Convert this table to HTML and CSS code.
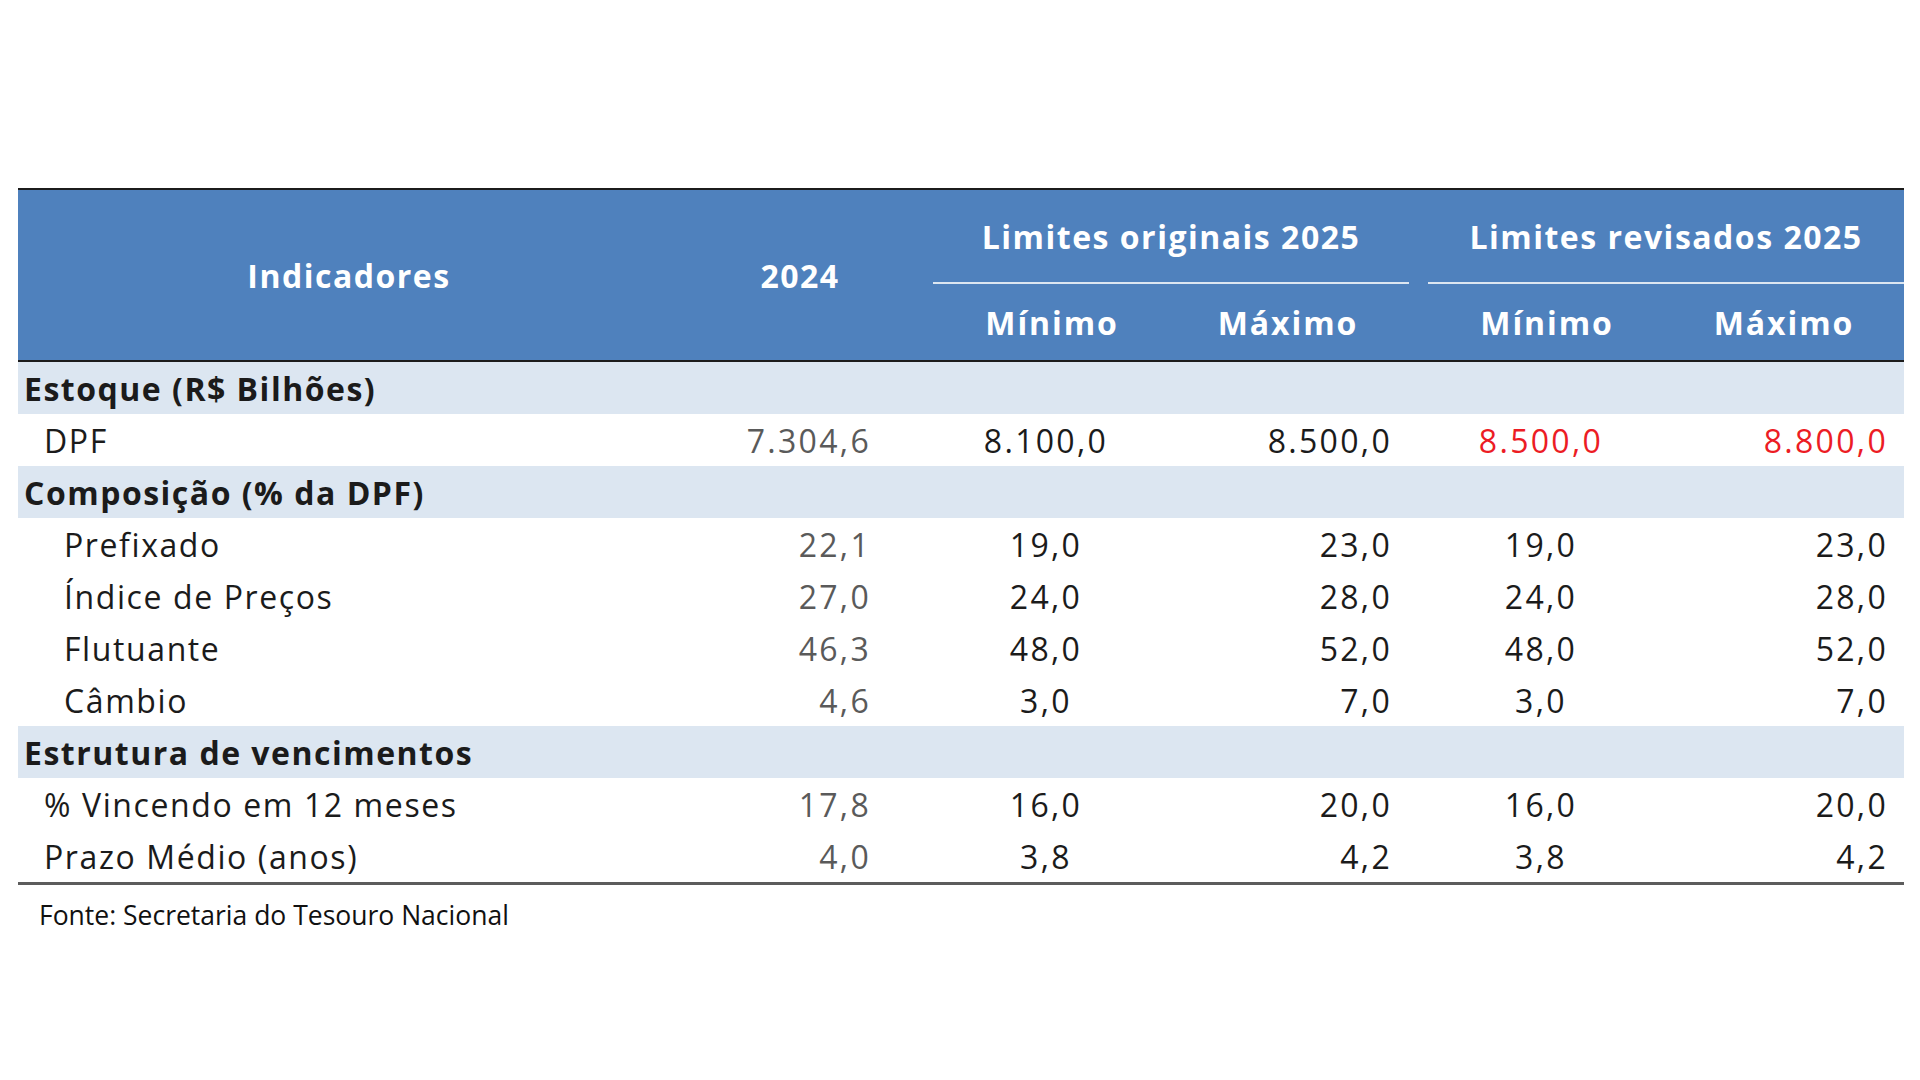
FILE: index.html
```html
<!DOCTYPE html>
<html lang="pt-BR">
<head>
<meta charset="utf-8">
<title>Limites DPF 2025</title>
<link rel="stylesheet" href="styles.css">
</head>
<body>
<main class="page">
  <table class="dpf">
    <colgroup>
      <col class="c1"><col class="c2"><col class="c3"><col class="c4"><col class="c5"><col class="c6">
    </colgroup>
    <thead>
      <tr class="h1">
        <th rowspan="2" class="hx">Indicadores</th>
        <th rowspan="2" class="hx">2024</th>
        <th colspan="2" class="grp"><div class="grp-title orig">Limites originais 2025</div></th>
        <th colspan="2" class="grp"><div class="grp-title rev">Limites revisados 2025</div></th>
      </tr>
      <tr class="h2">
        <th class="sub s3">Mínimo</th>
        <th class="sub s4">Máximo</th>
        <th class="sub s5">Mínimo</th>
        <th class="sub s6">Máximo</th>
      </tr>
    </thead>
    <tbody>
      <tr class="sec"><td colspan="6">Estoque (R$ Bilhões)</td></tr>
      <tr>
        <td class="lbl l1">DPF</td><td class="v2">7.304,6</td><td class="v3">8.100,0</td><td class="v4">8.500,0</td><td class="v5 red">8.500,0</td><td class="v6 red">8.800,0</td>
      </tr>
      <tr class="sec"><td colspan="6">Composição (% da DPF)</td></tr>
      <tr>
        <td class="lbl l2">Prefixado</td><td class="v2">22,1</td><td class="v3">19,0</td><td class="v4">23,0</td><td class="v5">19,0</td><td class="v6">23,0</td>
      </tr>
      <tr>
        <td class="lbl l2">Índice de Preços</td><td class="v2">27,0</td><td class="v3">24,0</td><td class="v4">28,0</td><td class="v5">24,0</td><td class="v6">28,0</td>
      </tr>
      <tr>
        <td class="lbl l2">Flutuante</td><td class="v2">46,3</td><td class="v3">48,0</td><td class="v4">52,0</td><td class="v5">48,0</td><td class="v6">52,0</td>
      </tr>
      <tr>
        <td class="lbl l2">Câmbio</td><td class="v2">4,6</td><td class="v3">3,0</td><td class="v4">7,0</td><td class="v5">3,0</td><td class="v6">7,0</td>
      </tr>
      <tr class="sec"><td colspan="6">Estrutura de vencimentos</td></tr>
      <tr>
        <td class="lbl l1">% Vincendo em 12 meses</td><td class="v2">17,8</td><td class="v3">16,0</td><td class="v4">20,0</td><td class="v5">16,0</td><td class="v6">20,0</td>
      </tr>
      <tr class="last">
        <td class="lbl l1">Prazo Médio (anos)</td><td class="v2">4,0</td><td class="v3">3,8</td><td class="v4">4,2</td><td class="v5">3,8</td><td class="v6">4,2</td>
      </tr>
    </tbody>
  </table>
  <p class="source">Fonte: Secretaria do Tesouro Nacional</p>
</main>
</body>
</html>
```
FILE: styles.css
```css
html, body {
  margin: 0;
  padding: 0;
  background: #ffffff;
}

.page {
  padding: 188px 16px 0 18px;
  font-family: "Open Sans", "Liberation Sans", sans-serif;
}

.dpf {
  width: 1886px;
  table-layout: fixed;
  border-collapse: collapse;
  border-top: 2px solid #1c1c1c;
  border-bottom: 3px solid #5c5c5c;
  font-size: 32px;
  letter-spacing: 1.6px;
  color: #1b1b1b;
}

.c1 { width: 662px; }
.c2 { width: 240px; }
.c3 { width: 252px; }
.c4 { width: 246px; }
.c5 { width: 262px; }
.c6 { width: 224px; }

thead th {
  background: #4f81bd;
  color: #ffffff;
  font-weight: 700;
  letter-spacing: 1.5px;
  padding: 0;
}

.h1 th { height: 94px; }
.h2 th { height: 76px; }

.hx {
  border-bottom: 2px solid #1c1c1c;
}

.grp {
  vertical-align: bottom;
}

.grp-title {
  height: 92px;
  display: flex;
  align-items: center;
  justify-content: center;
  border-bottom: 2px solid #dce6f1;
}

.grp-title.orig {
  margin-left: 13px;
  margin-right: 9px;
}

.grp-title.rev {
  margin-left: 10px;
}

.sub {
  border-bottom: 2px solid #1c1c1c;
  vertical-align: middle;
  letter-spacing: 1.9px;
}

.s3 { padding-left: 12px; }
.s4 { padding-right: 14px; }
.s5 { padding-right: 4px; }
.s6 { padding-right: 16px; }

tbody td {
  height: 52px;
  padding: 0;
  white-space: nowrap;
  vertical-align: middle;
}

.sec td {
  background: #dce6f1;
  font-weight: 700;
  letter-spacing: 1.5px;
  padding-left: 6px;
}

.lbl.l1 { padding-left: 26px; }
.lbl.l2 { padding-left: 46px; }

.v2, .v3, .v4, .v5, .v6 {
  letter-spacing: 2.3px;
}

.v2 {
  text-align: right;
  padding-right: 49px;
  color: #5a5a5a;
}

.v3 {
  text-align: center;
}

.v4 {
  text-align: right;
  padding-right: 26px;
}

.v5 {
  text-align: center;
  padding-right: 16px;
}

.v6 {
  text-align: right;
  padding-right: 16px;
}

.red {
  color: #ec1c24;
}

.source {
  margin: 12px 0 0 21px;
  font-size: 26.5px;
  color: #111111;
}
```
